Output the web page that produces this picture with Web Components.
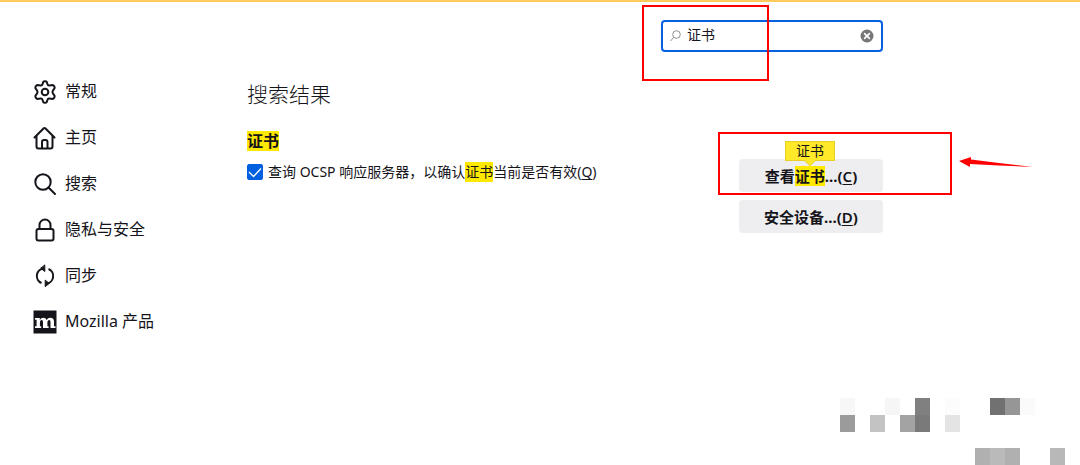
<!DOCTYPE html>
<html lang="zh-CN">
<head>
<meta charset="utf-8">
<title>设置</title>
<style>
  body { margin: 0; background: #fff; color: #15141a; font-family: "Noto Sans", "Noto Sans CJK SC", sans-serif; font-size: 16px; }
</style>
</head>
<body>
<settings-page></settings-page>

<template id="t-page">
  <style>
    :host { display: block; position: relative; box-sizing: border-box; min-height: 100vh; border-top: 2px solid #fdcb5c; overflow: hidden; }
    .layout { display: grid; grid-template-columns: 214px minmax(0, 636px); padding: 18px 33px 0; }
    nav { padding-top: 49px; }
    ul { list-style: none; margin: 0; padding: 0; }
    .bar { display: flex; justify-content: flex-end; }
    h1 { margin: 28px 0 0; font-size: 21px; line-height: 28px; font-weight: 300; }
    h2 { margin: 23px 0 0; font-size: 16px; line-height: 20px; font-weight: 700; }
    .row { display: flex; justify-content: space-between; align-items: flex-start; margin-top: 8px; }
    .buttons { position: relative; display: flex; flex-direction: column; gap: 8px; width: 144px; }
    .arrow { position: absolute; left: 220px; top: -4px; }
    mosaic-blocks { position: absolute; right: 15px; bottom: 0; }
    search-field, .buttons { flex: none; }
    red-frame.a { left: -19px; top: -15px; width: 127px; height: 76px; }
    red-frame.b { left: -21px; top: -27px; width: 234px; height: 63px; }
  </style>
  <div class="layout">
    <nav aria-label="设置">
      <ul>
        <li><nav-item icon="gear">常规</nav-item></li>
        <li><nav-item icon="home">主页</nav-item></li>
        <li><nav-item icon="search">搜索</nav-item></li>
        <li><nav-item icon="lock">隐私与安全</nav-item></li>
        <li><nav-item icon="sync">同步</nav-item></li>
        <li><nav-item icon="mozilla">Mozilla 产品</nav-item></li>
      </ul>
    </nav>
    <main>
      <div class="bar"><search-field value="证书"><red-frame class="a"></red-frame></search-field></div>
      <h1>搜索结果</h1>
      <h2><hit-mark>证书</hit-mark></h2>
      <div class="row">
        <check-option checked>查询 OCSP 响应服务器，以确认<hit-mark>证书</hit-mark>当前是否有效(<u>Q</u>)</check-option>
        <div class="buttons">
          <action-button tip="证书">查看<hit-mark>证书</hit-mark>...(<u>C</u>)</action-button>
          <action-button>安全设备...(<u>D</u>)</action-button>
          <red-frame class="b"></red-frame>
          <svg class="arrow" width="75" height="14" viewBox="0 0 75 14" aria-hidden="true"><path fill="#f00" d="M0 6 12 2V4.500L40 8 74 12 40 10.500 11 9V12Z"/></svg>
        </div>
      </div>
    </main>
  </div>
  <mosaic-blocks></mosaic-blocks>
</template>

<template id="t-nav">
  <style>
    :host { display: block; }
    a { display: flex; align-items: center; gap: 8px; height: 46px; color: inherit; text-decoration: none; white-space: nowrap; }
    span { line-height: 24px; padding-bottom: 2px; }
    svg { flex: none; width: 24px; height: 24px; fill: none; stroke: #15141a; stroke-width: 2; stroke-linecap: round; stroke-linejoin: round; }
  </style>
  <a href="#"><svg viewBox="0 0 24 24" aria-hidden="true"></svg><span><slot></slot></span></a>
</template>

<template id="t-search">
  <style>
    :host { display: block; position: relative; width: 222px; }
    .box { display: flex; align-items: center; gap: 6px; box-sizing: border-box; height: 32px; padding: 0 7px; border: 2px solid #0561e0; border-radius: 4px; background: #fff; }
    input { flex: 1; min-width: 0; padding: 0 0 2px; border: 0; outline: 0; background: none; font: inherit; font-size: 14px; line-height: 20px; color: inherit; }
    button { display: flex; padding: 0; border: 0; background: none; }
    svg { flex: none; }
  </style>
  <div class="box">
    <svg width="11" height="12" viewBox="0 0 11 12" fill="none" stroke="#8f8f95" aria-hidden="true"><circle cx="6.500" cy="4.500" r="3.800"/><path d="M3.800 7.300.5 11"/></svg>
    <input type="text" aria-label="在设置中查找">
    <button type="button" aria-label="清除"><svg width="14" height="14" viewBox="0 0 14 14"><circle cx="7" cy="7" r="6.500" fill="#77777a"/><path d="m4.600 4.600 4.800 4.800m0-4.800L4.600 9.400" stroke="#fff" stroke-width="1.600" stroke-linecap="round"/></svg></button>
  </div>
  <slot></slot>
</template>

<template id="t-check">
  <style>
    :host { display: block; min-width: 0; padding-top: 3px; }
    label { display: flex; align-items: flex-start; gap: 5px; font-size: 14px; line-height: 20px; }
    .tick { position: relative; display: flex; flex: none; margin-top: 2px; }
    input { appearance: none; width: 16px; height: 16px; margin: 0; border: 1px solid #8f8f9d; border-radius: 2px; }
    input:checked { border-color: #0060df; background: #0060df; }
    svg { position: absolute; inset: 0; pointer-events: none; }
    input:not(:checked) + svg { display: none; }
    ::slotted(u) { text-underline-offset: 2px; }
  </style>
  <label><span class="tick"><input type="checkbox"><svg width="16" height="16" viewBox="0 0 16 16" fill="none" stroke="#fff" stroke-width="1.300" aria-hidden="true"><path d="m2 8 4.500 4.500 7.500-8"/></svg></span><span><slot></slot></span></label>
</template>

<template id="t-button">
  <style>
    :host { display: block; position: relative; }
    button { display: block; width: 100%; height: 33px; padding: 0; border: 0; border-radius: 4px; background: #eeeef0; color: inherit; font: inherit; font-size: 15px; font-weight: 700; line-height: 20px; white-space: nowrap; }
    ::slotted(u) { font-weight: 600; text-decoration-thickness: 1px; text-underline-offset: 2px; }
    .tip { position: absolute; left: 46px; top: -18px; box-sizing: border-box; width: 50px; height: 20px; border: 1px solid #e8cf2a; background: #ffe929; font-size: 14px; line-height: 18px; text-align: center; }
    .tip svg { position: absolute; left: 18px; top: 18px; }
  </style>
  <button type="button"><slot></slot></button>
</template>

<script>
  const define = (name, id, setup) => customElements.define(name, class extends HTMLElement {
    connectedCallback() {
      if (this.shadowRoot) return;
      const root = this.attachShadow({ mode: 'open' });
      root.append(document.getElementById(id).content.cloneNode(true));
      if (setup) setup(this, root);
    }
  });

  const ICONS = {
    gear: '<circle cx="12" cy="12" r="3.300"/><path d="M10.200 1.900C10.800.9 13.200.9 13.800 1.900L14.400 4Q14.800 5.600 16.600 5.400L19.400 5.100C20.900 5.200 22.100 7.300 21.500 8.400L20 10.300Q18.900 12 20 13.700L21.500 15.600C22.100 16.700 20.900 18.800 19.400 18.900L16.600 18.600Q14.800 18.400 14.400 20L13.800 22.100C13.200 23.100 10.800 23.100 10.200 22.100L9.600 20Q9.200 18.400 7.400 18.600L4.600 18.900C3.100 18.800 1.900 16.700 2.500 15.600L4 13.700Q5.100 12 4 10.300L2.500 8.400C1.900 7.300 3.100 5.200 4.600 5.100L7.400 5.400Q9.200 5.600 9.600 4Z"/>',
    home: '<path d="m1.500 11.500 9-9q1-1 2 0l9 9M3.500 10v10.500q0 2 2 2h12q2 0 2-2V10M9 22v-6q0-2 2-2h1.500q2 0 2 2v6"/>',
    search: '<circle cx="10" cy="10" r="7.700"/><path d="m15.500 15.500 6.500 6.500"/>',
    lock: '<rect x="3.500" y="11" width="17" height="11.500" rx="2"/><path d="M6.500 11V7a5.500 5.500 0 0 1 11 0v4"/>',
    sync: '<path stroke-linecap="butt" d="M8.500 19A7.600 7.600 0 0 1 11 4.400M15.500 5A7.600 7.600 0 0 1 13 19.600"/><path fill="#15141a" stroke-width="1" d="M11.800 1.300V7.500L8 4.400ZM12.200 16.500v6.200l3.800-3.100Z"/>',
    mozilla: '<path fill="#15141a" stroke="none" d="M.5.5h23v23H.5z"/><path fill="#fff" stroke="none" d="M2 8h4.800v2Q8 7.700 10.400 7.700q2.500 0 3.200 2.400 1.200-2.400 3.700-2.400 3.700 0 3.700 4.100v4.400h1.500V18h-5v-6q0-2-1.200-2-1.900 0-1.900 2.800v3.400h1.200V18H10v-6q0-2-1.200-2-1.900 0-1.900 2.800v3.400h1.300V18H2v-1.800h1.600V9.800H2Z"/>'
  };

  define('nav-item', 't-nav', (host, root) => {
    root.querySelector('svg').innerHTML = ICONS[host.getAttribute('icon')];
  });
  define('search-field', 't-search', (host, root) => {
    const input = root.querySelector('input');
    input.value = host.getAttribute('value') || '';
    root.querySelector('button').onclick = () => { input.value = ''; input.focus(); };
  });
  define('check-option', 't-check', (host, root) => {
    root.querySelector('input').checked = host.hasAttribute('checked');
  });
  define('action-button', 't-button', (host, root) => {
    if (!host.hasAttribute('tip')) return;
    const tip = document.createElement('span');
    tip.className = 'tip';
    tip.textContent = host.getAttribute('tip');
    tip.insertAdjacentHTML('beforeend', '<svg width="12" height="6" viewBox="0 0 12 6" aria-hidden="true"><path fill="#ffe929" d="M0 0h12L6 6Z"/><path fill="none" stroke="#e8cf2a" d="m0 0 6 5.500L12 0"/></svg>');
    root.append(tip);
  });

  customElements.define('hit-mark', class extends HTMLElement {
    connectedCallback() {
      if (this.shadowRoot) return;
      this.attachShadow({ mode: 'open' }).innerHTML =
        '<style>:host{display:inline-block;line-height:20px}mark{display:block;height:20px;background:#ffe900;color:inherit}</style><mark><slot></slot></mark>';
    }
  });
  customElements.define('red-frame', class extends HTMLElement {
    connectedCallback() {
      if (this.shadowRoot) return;
      this.attachShadow({ mode: 'open' }).innerHTML =
        '<style>:host{display:block;position:absolute;box-sizing:border-box;border:2px solid #f00;pointer-events:none}</style>';
    }
  });
  customElements.define('mosaic-blocks', class extends HTMLElement {
    connectedCallback() {
      if (this.shadowRoot) return;
      const cells = [
        [0, 0, '#f7f7f7'], [45, 0, '#f6f6f6'], [75, 0, '#808080'], [105, 0, '#fcfcfc'],
        [150, 0, '#717171'], [165, 0, '#969696'], [180, 0, '#fafafa'],
        [0, 17, '#9b9b9b'], [30, 17, '#c3c3c3'], [60, 17, '#a3a3a3'], [75, 17, '#7a7a7a'], [105, 17, '#e4e4e4'],
        [135, 50, '#b0b0b0'], [150, 50, '#bababa'], [165, 50, '#b0b0b0'], [210, 50, '#b8b8b8']
      ];
      this.attachShadow({ mode: 'open' }).innerHTML =
        '<style>:host{display:block}svg{display:block}</style><svg width="225" height="67" aria-hidden="true">' +
        cells.map(([x, y, c]) => `<rect x="${x}" y="${y}" width="15" height="17" fill="${c}"/>`).join('') + '</svg>';
    }
  });
  define('settings-page', 't-page');
</script>
</body>
</html>
